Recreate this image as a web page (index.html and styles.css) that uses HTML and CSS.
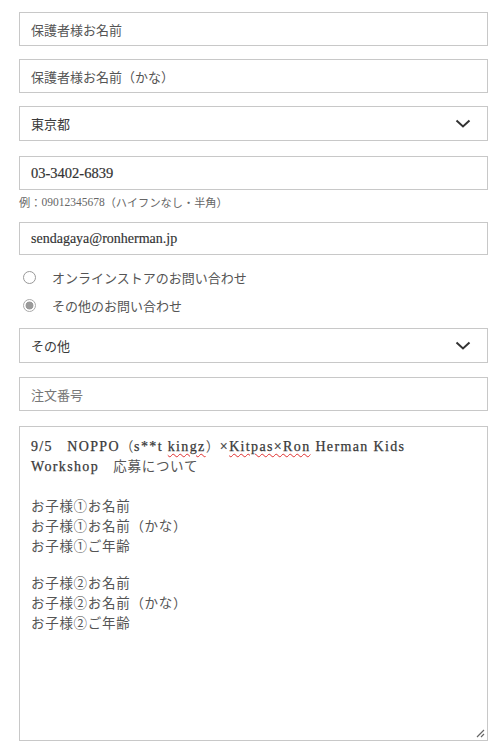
FILE: index.html
```html
<!DOCTYPE html>
<html lang="ja">
<head>
<meta charset="utf-8">
<link rel="stylesheet" href="styles.css">
</head>
<body>
<form class="form">
  <div class="field">保護者様お名前</div>
  <div class="field gap14">保護者様お名前（かな）</div>
  <div class="field select gap14">東京都
    <svg class="chev" width="16" height="9" viewBox="0 0 16 9"><path d="M1.5 1.5 L8 7.5 L14.5 1.5" fill="none" stroke="#333" stroke-width="2"/></svg>
  </div>
  <div class="field serif tel gap15">03-3402-6839</div>
  <div class="hint">例：<span class="serifnum">09012345678</span>（ハイフンなし・半角）</div>
  <div class="field serif mail">sendagaya@ronherman.jp</div>
  <div class="radios">
    <div class="radio"><span class="circle"></span><span>オンラインストアのお問い合わせ</span></div>
    <div class="radio"><span class="circle on"></span><span>その他のお問い合わせ</span></div>
  </div>
  <div class="field select">その他
    <svg class="chev" width="16" height="9" viewBox="0 0 16 9"><path d="M1.5 1.5 L8 7.5 L14.5 1.5" fill="none" stroke="#333" stroke-width="2"/></svg>
  </div>
  <div class="field ph gap14">注文番号</div>
  <div class="area">
    <div class="line"><span class="lat">9/5</span>　<span class="lat">NOPPO</span>（<span class="lat">s**t <span class="spell">kingz</span></span>）<span class="lat">×<span class="spell">Kitpas×Ron</span> Herman Kids</span></div>
    <div class="line"><span class="lat">Workshop</span>　応募について</div>
    <div class="line">&nbsp;</div>
    <div class="line">お子様①お名前</div>
    <div class="line">お子様①お名前（かな）</div>
    <div class="line">お子様①ご年齢</div>
    <div class="line short">&nbsp;</div>
    <div class="line">お子様②お名前</div>
    <div class="line">お子様②お名前（かな）</div>
    <div class="line">お子様②ご年齢</div>
    <svg class="grip" width="10" height="10" viewBox="0 0 10 10"><path d="M9 2 L2 9 M9 6 L6 9" stroke="#666" stroke-width="1.2"/></svg>
  </div>
</form>
</body>
</html>
```
FILE: styles.css
```css
* { box-sizing: border-box; }
html, body { margin: 0; padding: 0; background: #fff; }
body {
  font-family: "Noto Sans CJK JP", "Noto Sans", sans-serif;
  color: #555;
  font-size: 13px;
}
.form {
  display: flex;
  flex-direction: column;
  padding: 12px 0 0 19px;
  width: 488px;
}
.field {
  height: 34px;
  border: 1px solid #c8c8c8;
  display: flex;
  align-items: center;
  padding: 0 11px;
  color: #555;
  font-size: 13px;
  position: relative;
}
.gap14 { margin-top: 13px; }
.gap15 { margin-top: 15px; }
.select { height: 35px; justify-content: space-between; padding-right: 16px; color: #3a3a3a; }
.chev { display: block; }
.ph { margin-top: 14px; color: #777; }
.serif {
  font-family: "Liberation Serif", "Noto Sans CJK JP", serif;
}
.tel { font-size: 14.5px; color: #333; -webkit-text-stroke: 0.2px #333; }
.mail { font-size: 14px; color: #333; height: 33px; -webkit-text-stroke: 0.15px #333; }
.hint {
  height: 32px;
  display: flex;
  align-items: center;
  font-size: 11.2px;
  color: #666;
  padding-bottom: 8px;
}
.serifnum { font-family: "Liberation Serif", serif; font-size: 11.5px; }
.radios {
  display: flex;
  flex-direction: column;
  padding-top: 8px;
  margin-bottom: 9px;
}
.radio {
  height: 28px;
  display: flex;
  align-items: center;
  gap: 16px;
  padding-left: 4px;
  color: #555;
  font-size: 13px;
}
.circle {
  width: 13px;
  height: 13px;
  border-radius: 50%;
  border: 1px solid #999;
  background: #fff;
  flex: none;
}
.circle.on {
  border-color: #aaa;
  background: radial-gradient(circle, #9a9a9a 0 3.6px, #fff 4.3px);
}
.area {
  margin-top: 15px;
  height: 315px;
  border: 1px solid #c8c8c8;
  padding: 8px 11px;
  font-family: "Noto Sans CJK JP", sans-serif;
  font-size: 13.5px;
  letter-spacing: 0.7px;
  color: #555;
  position: relative;
}
.lat {
  font-family: "Liberation Serif", serif;
  font-size: 14px;
  letter-spacing: 1.36px;
  color: #3a3a3a;
  -webkit-text-stroke: 0.25px #3a3a3a;
}
.line {
  white-space: nowrap;
  height: 20px;
  line-height: 20px;
}
.line.short { height: 17px; }
.spell {
  text-decoration: underline wavy #e03030;
  text-decoration-thickness: 1px;
  text-underline-offset: 2px;
}
.grip { position: absolute; right: 2px; bottom: 2px; }
```
